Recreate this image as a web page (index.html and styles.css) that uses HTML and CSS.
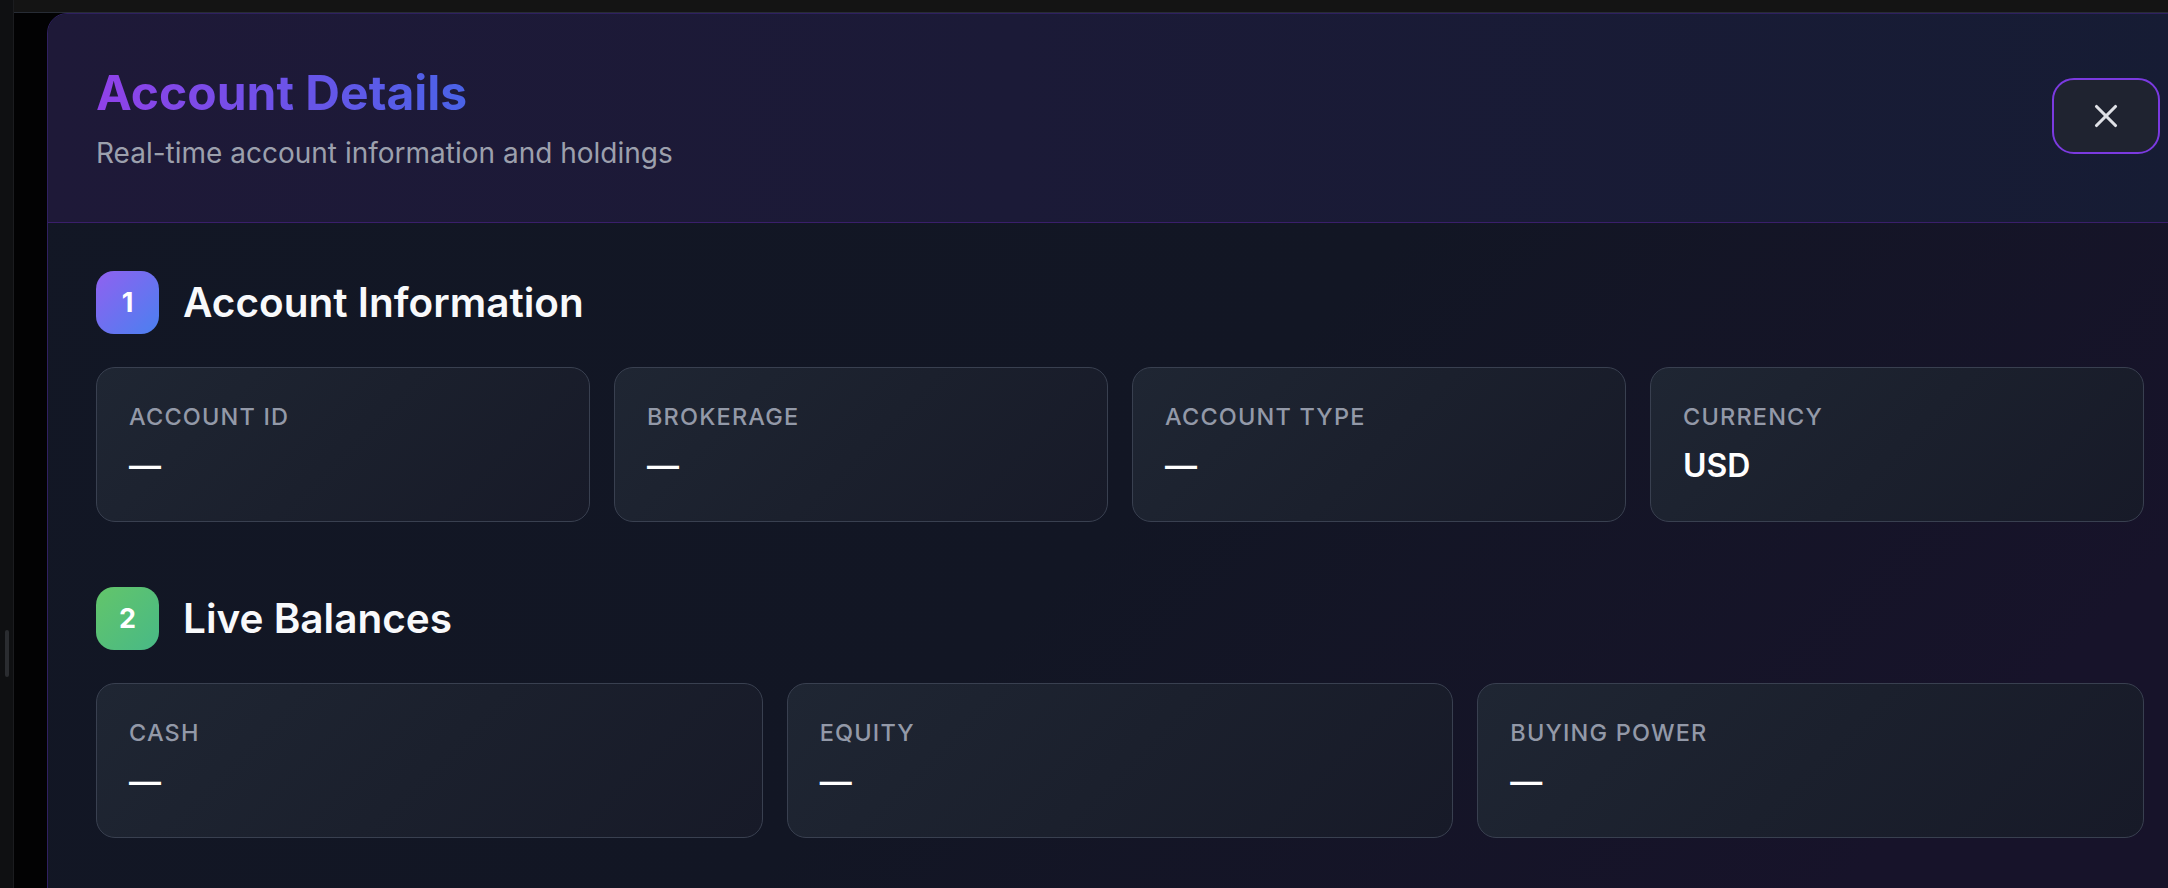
FILE: index.html
```html
<!DOCTYPE html>
<html lang="en">
<head>
<meta charset="utf-8">
<title>Account Details</title>
<link rel="stylesheet" href="styles.css">
</head>
<body>
<div class="app">
  <aside class="rail"><span class="rail-thumb"></span></aside>
  <div class="stage">
    <div class="topbar"></div>
    <div class="backdrop">
      <section class="modal">
        <header class="modal-header">
          <div class="heading">
            <h1 class="title">Account Details</h1>
            <p class="subtitle">Real-time account information and holdings</p>
          </div>
          <button class="close-btn" aria-label="Close">
            <svg viewBox="0 0 24 24" width="38" height="38" fill="none" stroke="currentColor" stroke-width="2" stroke-linecap="round" stroke-linejoin="round"><path d="M18 6 6 18"/><path d="m6 6 12 12"/></svg>
          </button>
        </header>
        <div class="modal-body">
          <section class="section">
            <div class="section-head">
              <span class="badge badge-violet">1</span>
              <h2 class="section-title">Account Information</h2>
            </div>
            <div class="grid grid-4">
              <div class="stat"><div class="stat-label">Account ID</div><div class="stat-value">—</div></div>
              <div class="stat"><div class="stat-label">Brokerage</div><div class="stat-value">—</div></div>
              <div class="stat"><div class="stat-label">Account Type</div><div class="stat-value">—</div></div>
              <div class="stat"><div class="stat-label">Currency</div><div class="stat-value">USD</div></div>
            </div>
          </section>
          <section class="section">
            <div class="section-head">
              <span class="badge badge-green">2</span>
              <h2 class="section-title">Live Balances</h2>
            </div>
            <div class="grid grid-3">
              <div class="stat"><div class="stat-label">Cash</div><div class="stat-value">—</div></div>
              <div class="stat"><div class="stat-label">Equity</div><div class="stat-value">—</div></div>
              <div class="stat"><div class="stat-label">Buying Power</div><div class="stat-value">—</div></div>
            </div>
          </section>
        </div>
      </section>
    </div>
  </div>
</div>
</body>
</html>
```
FILE: styles.css
```css
* { box-sizing: border-box; }
html, body {
  margin: 0;
  padding: 0;
  width: 2168px;
  height: 888px;
  overflow: hidden;
  background: #000;
  font-family: Inter, "Noto Sans", "Liberation Sans", sans-serif;
}
.app {
  display: flex;
  height: 888px;
}
.rail {
  width: 14px;
  flex-shrink: 0;
  background: #0f1012;
  border-right: 1px solid #1b1c1f;
  display: flex;
  flex-direction: column;
}
.rail-thumb {
  display: block;
  width: 4px;
  height: 47px;
  margin: 630px 0 0 5px;
  border-radius: 2px;
  background: #2a2c30;
}
.stage {
  flex: 1;
  min-width: 0;
  display: flex;
  flex-direction: column;
  overflow: hidden;
}
.topbar {
  height: 13px;
  flex-shrink: 0;
  background: #141414;
  border-bottom: 1px solid #272c35;
}
.backdrop {
  flex: 1;
  min-height: 0;
  background: #020203;
  padding-left: 33px;
  display: flex;
  align-items: flex-start;
  overflow: hidden;
}
.modal {
  width: 2146px;
  min-height: 1000px;
  flex-shrink: 0;
  border: 1.5px solid #2f2060;
  border-radius: 20px;
  overflow: hidden;
  background: linear-gradient(135deg, #121725 0%, #121624 50%, #17132a 85%);
}
.modal-header {
  display: flex;
  align-items: center;
  justify-content: space-between;
  padding: 51px 32px 49px 48px;
  background: linear-gradient(90deg, #1e1938 0%, #1b1a37 45%, #161c34 100%);
  border-bottom: 1.5px solid #3a1f6b;
}
.title {
  margin: 0;
  font-size: 48px;
  line-height: 56px;
  font-weight: 700;
  display: inline-block;
  background: linear-gradient(90deg, #9041e9 0%, #4a63e7 100%);
  -webkit-background-clip: text;
  background-clip: text;
  color: transparent;
}
.subtitle {
  margin: 12px 0 0;
  font-size: 28px;
  line-height: 40px;
  color: #9ca0ad;
}
.close-btn {
  width: 108px;
  height: 76px;
  margin-bottom: 6px;
  border: 2px solid #7b3ae0;
  border-radius: 22px;
  background: #1f2330;
  color: #dfe1e6;
  display: flex;
  align-items: center;
  justify-content: center;
  padding: 0;
}
.modal-body {
  padding: 48px 48px 48px;
  display: flex;
  flex-direction: column;
  gap: 65px;
}
.section-head {
  display: flex;
  align-items: center;
  gap: 24px;
  margin-bottom: 33px;
}
.badge {
  width: 63px;
  height: 63px;
  border-radius: 18px;
  display: flex;
  align-items: center;
  justify-content: center;
  color: #fff;
  font-size: 27px;
  font-weight: 700;
}
.badge-violet { background: linear-gradient(135deg, #9061f0 0%, #4a80f0 100%); }
.badge-green { background: linear-gradient(135deg, #63c56a 0%, #48b986 100%); }
.section-title {
  margin: 0;
  font-size: 40.5px;
  line-height: 50px;
  font-weight: 600;
  color: #f8f9fb;
}
.grid {
  display: grid;
  gap: 24px;
}
.grid-4 { grid-template-columns: repeat(4, 1fr); }
.grid-3 { grid-template-columns: repeat(3, 1fr); }
.stat {
  height: 155px;
  padding: 32px;
  border: 1px solid #394050;
  border-radius: 19px;
  background: linear-gradient(135deg, #1f2633 0%, #1b202d 50%, #171a28 100%);
}
.stat-label {
  font-size: 23.5px;
  line-height: 34px;
  font-weight: 500;
  text-transform: uppercase;
  letter-spacing: 0.05em;
  color: #9399a8;
}
.stat-value {
  margin-top: 9px;
  font-size: 32px;
  line-height: 45px;
  font-weight: 600;
  color: #fff;
}
```
